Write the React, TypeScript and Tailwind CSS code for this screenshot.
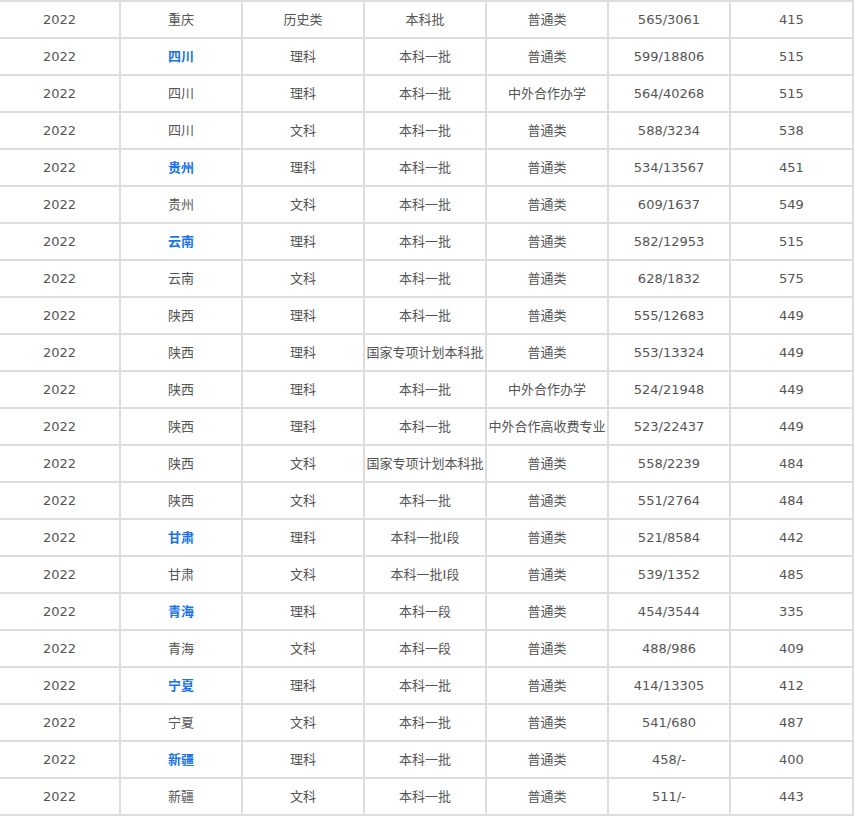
const rows: [string, boolean, string, string, string, string, string][] = [
  ["重庆", false, "历史类", "本科批", "普通类", "565/3061", "415"],
  ["四川", true, "理科", "本科一批", "普通类", "599/18806", "515"],
  ["四川", false, "理科", "本科一批", "中外合作办学", "564/40268", "515"],
  ["四川", false, "文科", "本科一批", "普通类", "588/3234", "538"],
  ["贵州", true, "理科", "本科一批", "普通类", "534/13567", "451"],
  ["贵州", false, "文科", "本科一批", "普通类", "609/1637", "549"],
  ["云南", true, "理科", "本科一批", "普通类", "582/12953", "515"],
  ["云南", false, "文科", "本科一批", "普通类", "628/1832", "575"],
  ["陕西", false, "理科", "本科一批", "普通类", "555/12683", "449"],
  ["陕西", false, "理科", "国家专项计划本科批", "普通类", "553/13324", "449"],
  ["陕西", false, "理科", "本科一批", "中外合作办学", "524/21948", "449"],
  ["陕西", false, "理科", "本科一批", "中外合作高收费专业", "523/22437", "449"],
  ["陕西", false, "文科", "国家专项计划本科批", "普通类", "558/2239", "484"],
  ["陕西", false, "文科", "本科一批", "普通类", "551/2764", "484"],
  ["甘肃", true, "理科", "本科一批I段", "普通类", "521/8584", "442"],
  ["甘肃", false, "文科", "本科一批I段", "普通类", "539/1352", "485"],
  ["青海", true, "理科", "本科一段", "普通类", "454/3544", "335"],
  ["青海", false, "文科", "本科一段", "普通类", "488/986", "409"],
  ["宁夏", true, "理科", "本科一批", "普通类", "414/13305", "412"],
  ["宁夏", false, "文科", "本科一批", "普通类", "541/680", "487"],
  ["新疆", true, "理科", "本科一批", "普通类", "458/-", "400"],
  ["新疆", false, "文科", "本科一批", "普通类", "511/-", "443"],
];

export default function App() {
  const td = "border-2 border-[#dddddd] text-center h-[37px] p-0";
  return (
    <div className="w-[855px] h-[819px] overflow-hidden bg-white">
      <table
        className="table-fixed border-collapse ml-[-2px] w-[856px] text-[13px] text-[#555]"
        style={{ fontFamily: 'Verdana, "DejaVu Sans", "Noto Sans CJK SC", sans-serif' }}
      >
        <colgroup>
          <col className="w-[121px]" />
          <col className="w-[122px]" />
          <col className="w-[122px]" />
          <col className="w-[122px]" />
          <col className="w-[122px]" />
          <col className="w-[122px]" />
          <col className="w-[123px]" />
        </colgroup>
        <tbody>
          {rows.map((r, i) => (
            <tr key={i}>
              <td className={td}>2022</td>
              <td className={td + (r[1] ? " text-[#1a73e8] font-bold" : "")}>{r[0]}</td>
              <td className={td}>{r[2]}</td>
              <td className={td}>{r[3]}</td>
              <td className={td}>{r[4]}</td>
              <td className={td}>{r[5]}</td>
              <td className={td}>{r[6]}</td>
            </tr>
          ))}
        </tbody>
      </table>
    </div>
  );
}
